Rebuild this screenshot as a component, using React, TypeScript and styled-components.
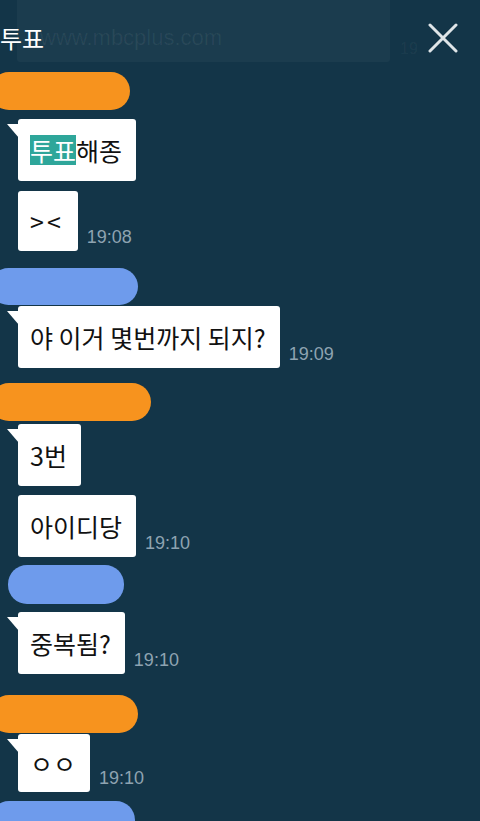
import React from 'react';
import styled, { createGlobalStyle } from 'styled-components';

const GlobalStyles = createGlobalStyle`
  html, body {
    margin: 0;
    padding: 0;
    background: #133548;
  }
  body {
    font-family: "Noto Sans CJK KR", "Noto Sans", sans-serif;
  }
`

const Screen = styled.div`
  width: 480px;
  height: 821px;
  overflow: hidden;
  background: #133548;
  display: flex;
  flex-direction: column;
`

const Header = styled.div`
  position: relative;
  height: 62px;
  flex-shrink: 0;
  display: flex;
  align-items: center;
  justify-content: space-between;
  padding: 0 22px 0 0;
`

const Title = styled.div`
  margin-left: 0;
  margin-top: 14px;
  font-size: 24px;
  line-height: 28px;
  color: #ffffff;
  z-index: 1;
`

const Toast = styled.div`
  position: absolute;
  left: 17px;
  top: 0;
  width: 373px;
  height: 62px;
  background: rgba(255, 255, 255, 0.035);
  border-radius: 0 0 3px 3px;
  padding: 25px 0 0 23px;
  box-sizing: border-box;
  font-family: "Liberation Sans", Arial, sans-serif;
  font-size: 22px;
  color: rgba(255, 255, 255, 0.06);
`

const ToastTime = styled.div`
  position: absolute;
  left: 400px;
  top: 40px;
  font-family: "Liberation Sans", Arial, sans-serif;
  font-size: 16px;
  color: rgba(255, 255, 255, 0.05);
`

const CloseButton = styled.div`
  margin-top: 14px;
  width: 30px;
  height: 30px;
  z-index: 1;
  display: flex;
`

const Feed = styled.div`
  display: flex;
  flex-direction: column;
`

const Scribble = styled.div<{ $w: number; $c: string; $mt: number; $mb: number; $h?: number; $left?: number }>`
  margin-top: ${p => p.$mt}px;
  margin-bottom: ${p => p.$mb}px;
  margin-left: ${p => p.$left ?? -10}px;
  width: ${p => p.$w - (p.$left ?? -10)}px;
  height: ${p => p.$h ?? 38}px;
  background: ${p => p.$c};
  border-radius: 19px;
  flex-shrink: 0;
`

const Row = styled.div<{ $mt?: number }>`
  display: flex;
  align-items: flex-end;
  gap: 9px;
  padding-left: 18px;
  margin-top: ${p => p.$mt ?? 0}px;
`

const Bubble = styled.div<{ $tail?: boolean; $h?: number }>`
  position: relative;
  background: #ffffff;
  border-radius: 3px;
  height: ${p => p.$h ?? 62}px;
  box-sizing: border-box;
  padding: 0 14px 0 12px;
  display: flex;
  align-items: center;
  font-size: 25px;
  line-height: 30px;
  color: #111111;
  white-space: nowrap;

  &::before {
    content: "";
    display: ${p => (p.$tail ? 'block' : 'none')};
    position: absolute;
    left: -11px;
    top: 5px;
    width: 12px;
    height: 14px;
    background: #ffffff;
    clip-path: polygon(0 0, 100% 0, 100% 100%);
  }
`

const Mark = styled.span`
  background: #2ea69a;
  color: #ffffff;
`

const Face = styled.span`
  letter-spacing: 3px;
`

const Time = styled.span`
  font-family: "Liberation Sans", Arial, sans-serif;
  font-size: 18px;
  line-height: 20px;
  color: #8ea3b1;
  margin-bottom: 4px;
`

function App() {
  return (
    <>
      <GlobalStyles />
      <Screen>
        <Header>
          <Title>투표</Title>
          <Toast>www.mbcplus.com</Toast>
          <ToastTime>19</ToastTime>
          <CloseButton>
            <svg width="30" height="30" viewBox="0 0 30 30">
              <path d="M2 2 L28 28 M28 2 L2 28" stroke="#dfe5e8" strokeWidth="3" strokeLinecap="round" />
            </svg>
          </CloseButton>
        </Header>

        <Feed>
          <Scribble $w={130} $c="#f7931e" $mt={10} $mb={9} />
          <Row>
            <Bubble $tail>
              <Mark>투표</Mark>해종
            </Bubble>
          </Row>
          <Row $mt={10}>
            <Bubble $h={60}><Face>&gt;&lt;</Face></Bubble>
            <Time>19:08</Time>
          </Row>

          <Scribble $w={138} $c="#6e9bec" $mt={17} $mb={1} $h={37} />
          <Row>
            <Bubble $tail>야 이거 몇번까지 되지?</Bubble>
            <Time>19:09</Time>
          </Row>

          <Scribble $w={151} $c="#f7931e" $mt={15} $mb={3} />
          <Row>
            <Bubble $tail>3번</Bubble>
          </Row>
          <Row $mt={9}>
            <Bubble>아이디당</Bubble>
            <Time>19:10</Time>
          </Row>

          <Scribble $w={124} $c="#6e9bec" $mt={8} $mb={8} $h={39} $left={8} />
          <Row>
            <Bubble $tail>중복됨?</Bubble>
            <Time>19:10</Time>
          </Row>

          <Scribble $w={138} $c="#f7931e" $mt={21} $mb={1} />
          <Row>
            <Bubble $tail $h={58}>ㅇㅇ</Bubble>
            <Time>19:10</Time>
          </Row>

          <Scribble $w={135} $c="#6e9bec" $mt={9} $mb={0} />
        </Feed>
      </Screen>
    </>
  );
}

export default App;
